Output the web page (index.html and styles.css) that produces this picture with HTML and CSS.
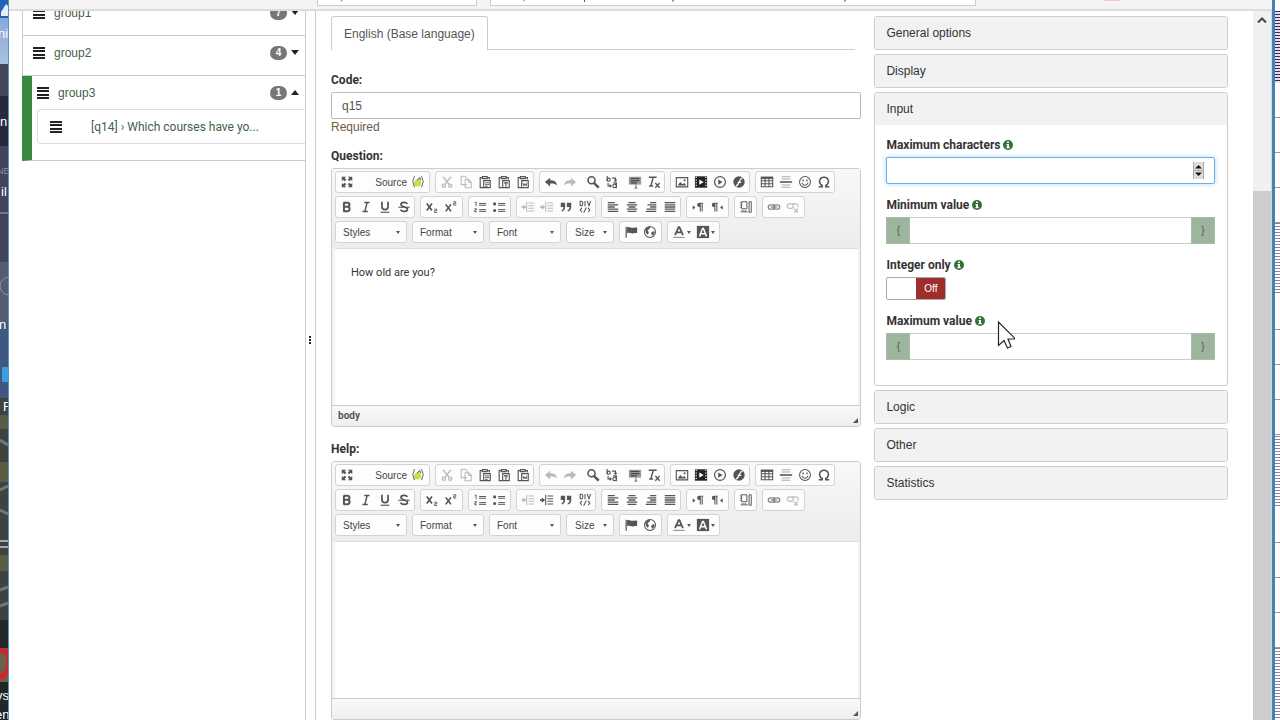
FILE: index.html
```html
<!DOCTYPE html>
<html lang="en">
<head>
    <meta charset="UTF-8">
    <meta name="viewport" content="width=device-width, initial-scale=1.0">
    <title>Edit question</title>
    <link rel="stylesheet" href="styles.css">
</head>
<body>
<!-- Icon sprite -->
<svg class="sprite" aria-hidden="true">
    <symbol id="i-bars" viewBox="0 0 12 12"><path d="M0 0h12v2H0zM0 3h12v2H0zM0 7h12v2H0zM0 10h12v2H0z" fill="currentColor"/></symbol>
    <symbol id="i-info" viewBox="0 0 10 10"><circle cx="5" cy="5" r="5" fill="#32703a"/><path d="M4 1.4h2v1.5H4zM3.4 3.9H6V7h.7v1.2H3.4V7h.7V5h-.7z" fill="#fff"/></symbol>
    <symbol id="i-maximize" viewBox="0 0 16 16"><path d="M2 2h5L5.4 3.6 7.2 5.4 5.4 7.2 3.6 5.4 2 7zM14 2v5l-1.6-1.6-1.8 1.8-1.8-1.8 1.8-1.8L9 2zM2 14V9l1.6 1.6 1.8-1.8 1.8 1.8-1.8 1.8L7 14zM14 14H9l1.6-1.6-1.8-1.8 1.8-1.8 1.8 1.8L14 9z" fill="currentColor"/></symbol>
    <symbol id="i-braces" viewBox="0 0 16 16"><circle cx="7.5" cy="9" r="4" fill="#c5e04a"/><path d="M4.500 1.500C2.500 1.500 3.500 7 1.500 7.500c2 .5 1 6 3 6M11.500 1.500c2 0 1 5.500 3 6-2 .5-1 6-3 6M7 6l3-3 1 3" fill="none" stroke="#667055" stroke-width="1.200"/></symbol>
    <symbol id="i-cut" viewBox="0 0 16 16"><g fill="none" stroke="currentColor" stroke-width="1.600"><path d="M3.500 2l6.800 8.500M12.500 2L5.700 10.500"/><circle cx="4.300" cy="12.200" r="1.800"/><circle cx="11.700" cy="12.200" r="1.800"/></g></symbol>
    <symbol id="i-copy" viewBox="0 0 16 16"><path d="M9 11H2.500V1.500H7L9.500 4v1M7 5.500h4.500L14 8v6.500H7zM11 5.500V8.500h3" fill="none" stroke="currentColor" stroke-width="1.200"/></symbol>
    <symbol id="i-paste" viewBox="0 0 16 16"><path d="M5 3H2.500v11.500H6M10.500 3H13v2M5 1.800h5.500v2.400H5zM6.500 6.500h7.500v8H6.500z" fill="none" stroke="currentColor" stroke-width="1.300"/><path d="M8 9h5M8 11h5M8 13h3" stroke="currentColor"/></symbol>
    <symbol id="i-pastetext" viewBox="0 0 16 16"><path d="M5 3H2.500v11.500H6M10.500 3H13v2M5 1.800h5.500v2.400H5zM6.500 6.500h7.500v8H6.500z" fill="none" stroke="currentColor" stroke-width="1.300"/><path d="M8 9h4.500M10.200 9v4.500" stroke="currentColor" stroke-width="1.300"/></symbol>
    <symbol id="i-pasteword" viewBox="0 0 16 16"><path d="M5 3H2.500v11.500H6M10.500 3H13v2M5 1.800h5.500v2.400H5zM6.500 6.500h7.500v8H6.500z" fill="none" stroke="currentColor" stroke-width="1.300"/><path d="M8 9l1 3.500 1.200-2.500 1.300 2.500 1-3.500" fill="none" stroke="currentColor"/></symbol>
    <symbol id="i-undo" viewBox="0 0 16 16"><path d="M1 8l6-5v3c5 0 7.500 2 8 6-2-2-4-2.500-8-2.300V13z" fill="currentColor"/></symbol>
    <symbol id="i-redo" viewBox="0 0 16 16"><path d="M15 8L9 3v3c-5 0-7.500 2-8 6 2-2 4-2.500 8-2.300V13z" fill="currentColor"/></symbol>
    <symbol id="i-find" viewBox="0 0 16 16"><circle cx="6.300" cy="6" r="4" fill="none" stroke="currentColor" stroke-width="1.800"/><path d="M9 9l5.500 5.500" stroke="currentColor" stroke-width="2.800"/></symbol>
    <symbol id="i-replace" viewBox="0 0 16 16"><g fill="none" stroke="currentColor" stroke-width="1.300"><path d="M2.500 1v6"/><circle cx="4.200" cy="5.300" r="1.800"/><circle cx="11" cy="12.500" r="2"/><path d="M9.500 9h3.500v6M8 3.500h4V7M10.500 5.500L12 7l1.500-1.500M3.500 9v3.500H7M5.500 11L7 12.500 5.500 14"/></g></symbol>
    <symbol id="i-selectall" viewBox="0 0 16 16"><path d="M1 2h14v9H1z" fill="#999"/><path d="M3 4h10M3 6.500h10M3 9h7" stroke="#444" stroke-width="1.300"/><path d="M9 11v4M7.500 15h3" stroke="currentColor"/></symbol>
    <symbol id="i-removeformat" viewBox="0 0 16 16"><path d="M2 2.500h9M7 3L4.500 12M2.500 12.500H7M9.500 9l5 5.500M14.500 9l-5 5.500" fill="none" stroke="currentColor" stroke-width="1.600"/></symbol>
    <symbol id="i-image" viewBox="0 0 16 16"><path d="M1.500 3h13v10.500h-13z" fill="none" stroke="currentColor" stroke-width="1.300"/><path d="M3 12l3-4 2.500 2.500L10.500 9l2.500 3z" fill="currentColor"/><circle cx="11" cy="6" r="1.200" fill="currentColor"/></symbol>
    <symbol id="i-video" viewBox="0 0 16 16"><path d="M1 1.500h14v13H1z" fill="#222"/><path d="M2.500 2v12M13.500 2v12" stroke="#fff" stroke-width="1.300" stroke-dasharray="1.500 1.500"/><path d="M6 5l5 3-5 3z" fill="#fff"/></symbol>
    <symbol id="i-play" viewBox="0 0 16 16"><circle cx="8" cy="8" r="6.200" fill="none" stroke="currentColor" stroke-width="1.400"/><path d="M6 5l5 3-5 3z" fill="currentColor"/></symbol>
    <symbol id="i-flash" viewBox="0 0 16 16"><circle cx="8" cy="8" r="6.500" fill="currentColor"/><path d="M12 3.500C8 3.500 8.500 12 4.500 12.500M6.500 8.500h4" fill="none" stroke="#fff" stroke-width="1.400"/></symbol>
    <symbol id="i-table" viewBox="0 0 16 16"><path d="M1.500 2.500h13v11h-13zM1.500 6.500h13M1.500 10h13M5.800 3v10.500M10.200 3v10.500" fill="none" stroke="currentColor" stroke-width="1.200"/><path d="M1 2h14v2.500H1z" fill="currentColor"/></symbol>
    <symbol id="i-hr" viewBox="0 0 16 16"><path d="M3 2h10M3 4.500h10M3 11.500h10M3 14h10" stroke="#aaa" stroke-width="1.200"/><path d="M1 8h14" stroke="currentColor" stroke-width="1.800"/></symbol>
    <symbol id="i-smiley" viewBox="0 0 16 16"><circle cx="8" cy="8" r="6.200" fill="none" stroke="currentColor" stroke-width="1.200"/><path d="M4.500 9c1.500 3.500 5.500 3.500 7 0" fill="none" stroke="currentColor" stroke-width="1.200"/><path d="M5 5h1.600v2H5zM9.500 5H11v2H9.500z" fill="currentColor"/></symbol>
    <symbol id="i-omega" viewBox="0 0 16 16"><path d="M2 13.500h4V12C1 9 2.500 2.500 8 2.500S15 9 10 12v1.500h4" fill="none" stroke="currentColor" stroke-width="1.800"/></symbol>
    <symbol id="i-bold" viewBox="0 0 16 16"><path d="M4.500 3v10M4 3.200h4.500a2.300 2.300 0 0 1 0 4.600H5M8.500 7.800a2.500 2.500 0 0 1 0 5H4" fill="none" stroke="currentColor" stroke-width="2.300"/></symbol>
    <symbol id="i-italic" viewBox="0 0 16 16"><path d="M6 2.800h6M4 13.200h6M9.300 3L6.700 13" fill="none" stroke="currentColor" stroke-width="1.700"/></symbol>
    <symbol id="i-underline" viewBox="0 0 16 16"><path d="M4.500 2v5.500a3.500 3.500 0 0 0 7 0V2" fill="none" stroke="currentColor" stroke-width="2"/><path d="M3 14h10" stroke="currentColor" stroke-width="1.300"/></symbol>
    <symbol id="i-strike" viewBox="0 0 16 16"><path d="M12 4.500C10.500 2 4.500 2 4.500 5.200c0 3.300 7.500 2.200 7.500 5.300 0 3.300-6.500 3.300-8 .5" fill="none" stroke="currentColor" stroke-width="1.900"/><path d="M1.500 8.300h13" stroke="currentColor" stroke-width="1.200"/></symbol>
    <symbol id="i-sub" viewBox="0 0 16 16"><path d="M2 4l6 8M8 4l-6 8" stroke="currentColor" stroke-width="1.900"/><path d="M10.500 10.500h3v1.800h-2.500v2h3" fill="none" stroke="currentColor"/></symbol>
    <symbol id="i-sup" viewBox="0 0 16 16"><path d="M2 5l6 8M8 5l-6 8" stroke="currentColor" stroke-width="1.900"/><path d="M10.500 2h3v1.800h-2.500v2h3" fill="none" stroke="currentColor"/></symbol>
    <symbol id="i-ol" viewBox="0 0 16 16"><path d="M7 4h8M7 6h8M7 11h8M7 13h8" stroke="currentColor" stroke-width="1.100"/><path d="M2 3l1.500-.8V7M1.800 9.800h2V11.500H2v2h2.500" fill="none" stroke="currentColor"/></symbol>
    <symbol id="i-ul" viewBox="0 0 16 16"><path d="M7 4h8M7 6h8M7 11h8M7 13h8" stroke="currentColor" stroke-width="1.100"/><circle cx="3" cy="4.500" r="1.800" fill="currentColor"/><circle cx="3" cy="12" r="1.800" fill="currentColor"/></symbol>
    <symbol id="i-outdent" viewBox="0 0 16 16"><path d="M6.500 2v12M8.500 3.500H15M8.500 6.500H15M8.500 9.500H15M8.500 12.500H15" stroke="currentColor" stroke-width="1.200"/><path d="M0 8l4-3v2h2v2H4v2z" fill="currentColor"/></symbol>
    <symbol id="i-indent" viewBox="0 0 16 16"><path d="M6.500 2v12M8.500 3.500H15M8.500 6.500H15M8.500 9.500H15M8.500 12.500H15" stroke="currentColor" stroke-width="1.200"/><path d="M6 8L2 5v2H0v2h2v2z" fill="currentColor"/></symbol>
    <symbol id="i-quote" viewBox="0 0 16 16"><path d="M2 3h5v5c0 3-1.500 4.500-4 5v-1.500C4.500 11 5 10 5 8H2zM9 3h5v5c0 3-1.500 4.500-4 5v-1.500c1.500-.5 2-1.500 2-3.500H9z" fill="currentColor"/></symbol>
    <symbol id="i-div" viewBox="0 0 16 16"><path d="M2.500 1.500v5H4c2 0 2-5 0-5zM8 1v6M10.500 1l2 5.500 2-5.500M4.500 9L2.500 11.500l2 2.500M9.500 8.500l-3 6M11.500 9l2 2.500-2 2.500" fill="none" stroke="currentColor" stroke-width="1.200"/></symbol>
    <symbol id="i-left" viewBox="0 0 16 16"><path d="M2 3h8M2 5.500h12M2 8h8M2 10.500h12M2 13h12" stroke="currentColor" stroke-width="1.500"/></symbol>
    <symbol id="i-center" viewBox="0 0 16 16"><path d="M4 3h8M2 5.500h12M4 8h8M2 10.500h12M3 13h10" stroke="currentColor" stroke-width="1.500"/></symbol>
    <symbol id="i-right" viewBox="0 0 16 16"><path d="M7 3h7M4 5.500h10M7 8h7M3 10.500h11M2 13h12" stroke="currentColor" stroke-width="1.500"/></symbol>
    <symbol id="i-justify" viewBox="0 0 16 16"><path d="M2 3h12M2 5.500h12M2 8h12M2 10.500h12M2 13h12" stroke="currentColor" stroke-width="1.500"/></symbol>
    <symbol id="i-ltr" viewBox="0 0 16 16"><path d="M2 6l3 2.500L2 11z" fill="currentColor"/><path d="M14 3H9.500a2.500 2.500 0 0 0 0 5H10v5h1.200V4h1v9h1.200V4H14z" fill="currentColor"/></symbol>
    <symbol id="i-rtl" viewBox="0 0 16 16"><path d="M14.500 6l-3 2.500 3 2.500z" fill="currentColor"/><path d="M9 3H4.500a2.500 2.500 0 0 0 0 5H5v5h1.200V4h1v9h1.200V4H9z" fill="currentColor"/></symbol>
    <symbol id="i-blocks" viewBox="0 0 16 16"><path d="M3 2h6v8H3zM2 13.500h8M11.500 2H14v12h-2.500z" fill="none" stroke="currentColor" stroke-width="1.100"/><path d="M1.500 2v8M3 12h6" stroke="currentColor" stroke-dasharray="1 1"/></symbol>
    <symbol id="i-link" viewBox="0 0 16 16"><g fill="none" stroke="#888"><rect x="1.500" y="5.500" width="7.500" height="5" rx="2.500" stroke-width="1.500"/><rect x="7" y="5.500" width="7.500" height="5" rx="2.500" stroke-width="1.500"/><path d="M4 8h8" stroke-width="1.200"/></g></symbol>
    <symbol id="i-unlink" viewBox="0 0 16 16"><rect x="1.500" y="4.500" width="7" height="5" rx="2.500" fill="none" stroke="currentColor" stroke-width="1.300"/><path d="M7 4.500h4.500a2.500 2.500 0 0 1 2 4M9.500 10l4 4.500M13.500 10l-4 4.500" fill="none" stroke="currentColor" stroke-width="1.300"/></symbol>
    <symbol id="i-flag" viewBox="0 0 16 16"><path d="M2.500 2v12.500" stroke="currentColor" stroke-width="1.400"/><path d="M3.500 2.500c3-1.200 4 1.200 6.500.7 1.500-.3 3-.7 5-.2v6.200c-3-.7-4.500.8-6.500.3-2-.6-3-.9-5 0z" fill="currentColor"/></symbol>
    <symbol id="i-globe" viewBox="0 0 16 16"><circle cx="8" cy="8" r="6.300" fill="none" stroke="currentColor" stroke-width="1.200"/><path d="M2.500 5L6 2l2.500.5L7 4.500 5 6l1.500 2v1.500L5.500 11 3.500 9zM10 8l2-1 1.500 1-1.500 3.500-2 .5-.5-2.500z" fill="currentColor"/></symbol>
    <symbol id="i-color" viewBox="0 0 16 16"><path d="M3.500 11.500L7.500 2.500h1l4 9M5 8.500h6" fill="none" stroke="currentColor" stroke-width="2"/><path d="M1.500 14.200h13" stroke="#999" stroke-width="1.400"/></symbol>
    <symbol id="i-bgcolor" viewBox="0 0 16 16"><path d="M1 1h14v14H1z" fill="currentColor"/><path d="M4 13L7.500 4h1l3.500 9M5.500 10h5" fill="none" stroke="#fff" stroke-width="1.600"/></symbol>
</svg>

<div class="desktop">
    <svg class="wallpaper" viewBox="0 0 8 720" preserveAspectRatio="xMinYMin slice" aria-hidden="true">
        <defs>
            <linearGradient id="sky" x1="0" y1="0" x2="0" y2="1">
                <stop offset="0" stop-color="#7e9fd0"/><stop offset="1" stop-color="#a9c0e3"/>
            </linearGradient>
        </defs>
        <path d="M0 0h8v64H0z" fill="url(#sky)"/>
        <path d="M0 0h8v18H0z" fill="#2462b5"/><path d="M1 12l5-8 2 2v10H1z" fill="#e4edf8"/>
        <path d="M0 64h8v32H0z" fill="#44485b"/><path d="M0 96h8v50H0z" fill="#262a3b"/>
        <path d="M0 146h8v116H0z" fill="#41445a"/><path d="M0 213h8" stroke="#aaa"/>
        <path d="M0 262h8v60H0z" fill="#555b70"/><circle cx="9" cy="286" r="9" fill="none" stroke="#8d93a5"/>
        <path d="M0 322h8v76H0z" fill="#40577f"/><path d="M2 367h6v15H2z" fill="#38a0e0"/>
        <path d="M0 398h8v322H0z" fill="#3f423f"/>
        <path d="M0 415h8v14H0zM0 462h8v20H0zM0 555h8v16H0z" fill="#5a5d43"/>
        <path d="M0 440l8 5M0 490l8-4M0 510l8 4M0 590l8-3M0 606l8-3" stroke="#71777c" stroke-width="3"/>
        <path d="M0 541h8M0 547h8" stroke="#a6a8aa" stroke-width="2"/>
        <path d="M0 620h8v28H0z" fill="#24272a"/><path d="M0 648h8v34H0z" fill="#6a614b"/>
        <path d="M0 651c9-2 11 8 7 21l-7 6" fill="none" stroke="#d8202a" stroke-width="5"/>
        <path d="M0 682h8v38H0z" fill="#22252a"/>
        <g class="wallpaper-text">
            <text x="-2" y="38">ni</text><text x="0" y="126">n</text><text class="dim" x="-3" y="174">NE</text>
            <text x="1" y="196">il</text><text x="-1" y="329">n</text><text x="3" y="411">F</text>
            <text x="-4" y="700">vs</text><text x="-5" y="719">en</text>
        </g>
    </svg>

    <div class="window">
        <div class="topbar">
            <svg width="160" height="6" viewBox="0 0 160 6" aria-hidden="true"><path d="M0-4h159.500V5.500H.5V-4" fill="#fff" stroke="#ccc"/><path d="M25 0l-1 1.500" stroke="#666"/></svg>
            <svg width="486" height="6" viewBox="0 0 486 6" aria-hidden="true"><path d="M.5-4v9.500h485V-4" fill="#fff" stroke="#ccc"/><path d="M94.500 0v2M184 0l-2 1.500M356 0l-2 1.500M34 0v1" fill="none" stroke="#555"/></svg>
            <svg class="topbar-mark" width="16" height="2" aria-hidden="true"><path d="M0 0h16v1H0z" fill="#f6c9c9"/></svg>
        </div>
        <div class="workspace">
            <nav class="sidebar">
                <ul class="groups">
                    <li class="group">
                        <a class="group-row" href="#group1"><svg class="bars"><use href="#i-bars"/></svg><span class="group-name">group1</span><span class="badge">7</span><span class="caret down"></span></a>
                    </li>
                    <li class="group">
                        <a class="group-row" href="#group2"><svg class="bars"><use href="#i-bars"/></svg><span class="group-name">group2</span><span class="badge">4</span><span class="caret down"></span></a>
                    </li>
                    <li class="group active">
                        <a class="group-row" href="#group3"><svg class="bars"><use href="#i-bars"/></svg><span class="group-name">group3</span><span class="badge">1</span><span class="caret up"></span></a>
                        <a class="question-row" href="#q14"><svg class="bars"><use href="#i-bars"/></svg><span>[q14] › Which courses have yo...</span></a>
                    </li>
                </ul>
            </nav>
            <div class="resizer"><i></i><i></i><i></i></div>
            <main class="content">
                <form class="question-form">
                    <div class="tabs"><a class="tab" href="#en">English (Base language)</a></div>
                    <label class="form-label" for="code">Code:</label>
                    <input class="form-control" id="code" type="text" value="q15">
                    <p class="help-text">Required</p>

                    <label class="form-label" for="question">Question:</label>
                    <div class="editor">
                        <div class="toolbar" data-state="edited"></div>
                        <textarea class="editor-body" id="question">How old are you?</textarea>
                        <div class="editor-foot"><span>body</span><i class="grip"></i></div>
                    </div>

                    <label class="form-label" for="help">Help:</label>
                    <div class="editor">
                        <div class="toolbar" data-state="empty"></div>
                        <textarea class="editor-body" id="help"></textarea>
                        <div class="editor-foot"><span></span><i class="grip"></i></div>
                    </div>
                </form>

                <aside class="panels">
                    <section class="panel"><button class="panel-heading" type="button">General options</button></section>
                    <section class="panel"><button class="panel-heading" type="button">Display</button></section>
                    <section class="panel open">
                        <button class="panel-heading" type="button">Input</button>
                        <div class="panel-body">
                            <div class="field">
                                <label for="maxchars">Maximum characters <svg class="info"><use href="#i-info"/></svg></label>
                                <div class="number">
                                    <input class="form-control focused" id="maxchars" type="number">
                                    <svg class="spinner" viewBox="0 0 11 17" aria-hidden="true"><path d="M0 0h11v17H0z" fill="#ddd"/><path d="M0 8.500h11M.5 0v17M10.500 0v17" stroke="#aaa"/><path d="M2 6.500L5.500 3 9 6.500zM2 10.500L5.500 14 9 10.500z" fill="#111"/></svg>
                                </div>
                            </div>
                            <div class="field">
                                <label for="minvalue">Minimum value <svg class="info"><use href="#i-info"/></svg></label>
                                <div class="input-group"><span class="addon">{</span><input class="form-control" id="minvalue" type="text"><span class="addon">}</span></div>
                            </div>
                            <div class="field">
                                <label for="integeronly">Integer only <svg class="info"><use href="#i-info"/></svg></label>
                                <label class="switch"><input id="integeronly" type="checkbox"><span class="knob"></span><span class="state">Off</span></label>
                            </div>
                            <div class="field">
                                <label for="maxvalue">Maximum value <svg class="info"><use href="#i-info"/></svg></label>
                                <div class="input-group"><span class="addon">{</span><input class="form-control" id="maxvalue" type="text"><span class="addon">}</span></div>
                            </div>
                        </div>
                    </section>
                    <section class="panel"><button class="panel-heading" type="button">Logic</button></section>
                    <section class="panel"><button class="panel-heading" type="button">Other</button></section>
                    <section class="panel"><button class="panel-heading" type="button">Statistics</button></section>
                </aside>
            </main>
            <div class="scrollbar">
                <svg width="10" height="6" viewBox="0 0 10 6" aria-hidden="true"><path d="M1 5.500l4-4 4 4" fill="none" stroke="#444" stroke-width="2"/></svg>
                <div class="thumb"></div>
            </div>
        </div>
    </div>
    <div class="behind">
        <div class="noise tall"></div>
        <div class="lines"></div>
        <div class="noise"></div>
        <div class="lines"></div>
        <div class="noise"></div>
        <div class="lines"></div>
        <div class="noise"></div>
    </div>
    <svg class="pointer" viewBox="0 0 18 28" aria-hidden="true"><path d="M1.500 1v23.500l5.500-5 3.500 7.500 3.500-1.500-3-7.500h7.500z" fill="#fff" stroke="#223" stroke-width="1.200"/></svg>
</div>
<script src="script.js"></script>
</body>
</html>
```
FILE: styles.css
```css
* {
    box-sizing: border-box;
}
body {
    margin: 0;
    font-family: "Liberation Sans", Arial, sans-serif;
    font-size: 12px;
    line-height: 16px;
    color: #333;
    background: #fff;
}
a {
    color: #456049;
    text-decoration: none;
}
button, input, select, textarea {
    font-family: inherit;
    font-size: inherit;
    color: inherit;
}
svg {
    display: block;
    flex: none;
}
.sprite {
    display: none;
}

/* Desktop and browser window */
.desktop {
    position: relative;
    display: flex;
    height: 100vh;
    overflow: hidden;
}
.wallpaper {
    width: 8px;
    height: 100%;
}
.wallpaper-text {
    fill: #fff;
    font-size: 13px;
}
.wallpaper-text .dim {
    fill: #8d909c;
    font-size: 9px;
}
.window {
    flex: 1;
    min-width: 0;
    display: flex;
    flex-direction: column;
    border-left: 1px solid #4b9cc0;
    border-right: 3px solid #4b7fae;
    background: #fff;
}
.topbar {
    flex: none;
    display: flex;
    gap: 13px;
    height: 11px;
    padding-left: 308px;
    background: #f4f4f4;
    border-bottom: 2px solid #dcdcdc;
}
.topbar-mark {
    margin-left: 115px;
}
.workspace {
    flex: 1;
    min-height: 0;
    display: flex;
}

/* Question explorer */
.sidebar {
    width: 297px;
    padding-left: 13px;
    border-right: 1px solid #ccc;
    overflow: hidden;
}
.groups {
    list-style: none;
    margin: -15px 0 0;
    padding: 0;
}
.group {
    border: 1px solid #ccc;
    border-right: 0;
    border-top: 0;
    min-height: 40px;
}
.group-row {
    display: flex;
    align-items: center;
    height: 33px;
    padding: 0 6px 0 10px;
}
.bars {
    width: 12px;
    height: 12px;
    color: #222;
}
.group-name {
    flex: 1;
    margin-left: 9px;
}
.badge {
    width: 17px;
    height: 14px;
    margin-right: 4px;
    border-radius: 7px;
    background: #777;
    color: #fff;
    font-size: 10px;
    font-weight: bold;
    line-height: 14px;
    text-align: center;
}
.caret {
    border: 4px solid transparent;
}
.caret.down {
    border-top: 5px solid #222;
    border-bottom: 0;
}
.caret.up {
    border-bottom: 5px solid #222;
    border-top: 0;
}
.group.active {
    padding-bottom: 16px;
    border-left: 10px solid #38893f;
}
.group.active .group-row {
    padding-left: 5px;
}
.question-row {
    display: flex;
    align-items: center;
    gap: 29px;
    height: 35px;
    margin-left: 5px;
    padding-left: 12px;
    border: 1px solid #ddd;
    border-right: 0;
    border-radius: 4px 0 0 4px;
    font-family: Roboto, sans-serif;
}
.resizer {
    width: 10px;
    padding: 325px 3px 0;
    border-right: 1px solid #ccc;
}
.resizer i {
    display: block;
    width: 2px;
    height: 2px;
    margin-bottom: 1px;
    background: #222;
}

/* Question form */
.content {
    flex: 1;
    min-width: 0;
    display: grid;
    grid-template-columns: 3fr 2fr;
    gap: 13px;
    padding: 5px 25px 0 15px;
    overflow: hidden;
}
.tabs {
    display: flex;
    height: 34px;
    margin-right: 6px;
    border-bottom: 1px solid #ccc;
}
.tab {
    height: 34px;
    padding: 9px 12px;
    border: 1px solid #ccc;
    border-bottom: 0;
    border-radius: 3px 3px 0 0;
    background: #fff;
    color: #555;
}
.form-label {
    display: block;
    margin-top: 14px;
    font-family: Roboto, sans-serif;
    font-weight: bold;
}
.tabs + .form-label {
    margin: 22px 0 4px;
}
.form-control {
    display: block;
    width: 100%;
    height: 27px;
    padding: 0 10px;
    border: 1px solid #bbb;
    border-radius: 2px;
    background: #fff;
    color: #555;
    outline: 0;
}
.help-text {
    margin: 0;
    color: #705a45;
}
.help-text + .form-label {
    margin-top: 13px;
}
.editor {
    display: flex;
    flex-direction: column;
    margin-top: 4px;
    border: 1px solid #ccc;
    border-radius: 3px;
    background: #f3f3f3;
}
.toolbar {
    display: flex;
    flex-direction: column;
    gap: 3px;
    padding: 2px 3px 5px;
    background: linear-gradient(#f8f8f8, #ececec);
}
.toolbar-row {
    display: flex;
    gap: 5px;
}
.tool-group {
    display: flex;
    align-items: center;
    height: 22px;
    padding: 0 1px;
    border: 1px solid #d3d3d3;
    border-radius: 3px;
    background: #fdfdfd;
}
.tool-group.pair {
    padding-right: 2px;
}
.tool {
    display: flex;
    align-items: center;
    justify-content: center;
    width: 19px;
    height: 20px;
    padding: 0;
    border: 0;
    background: none;
    color: #555;
}
.tool svg {
    width: 14px;
    height: 14px;
}
.tool.off {
    color: #bbb;
}
.tool.spaced {
    margin-left: 4px;
}
.tool.source {
    justify-content: flex-end;
    gap: 4px;
    width: 72px;
    padding-right: 3px;
    color: #444;
    font-size: 10px;
}
.tool.menu {
    width: 24px;
    gap: 1px;
}
.tool.menu::after, .combo::after {
    content: "";
    border: 2px solid transparent;
    border-top: 3px solid #555;
    border-bottom: 0;
}
.combo {
    position: relative;
    height: 22px;
    border: 1px solid #d3d3d3;
    border-radius: 3px;
    background: #fdfdfd;
}
.combo::after {
    position: absolute;
    top: 9px;
    right: 6px;
}
.combo select {
    appearance: none;
    width: 70px;
    height: 20px;
    padding: 0 7px;
    border: 0;
    background: none;
    font-size: 10px;
    color: #444;
}
.combo.small select {
    width: 46px;
    padding: 0 0 0 8px;
}
.editor-body {
    display: block;
    height: 157px;
    margin: 0 2px 0 3px;
    padding: 16px;
    border: 0;
    border-top: 1px solid #ddd;
    background: #fff;
    resize: none;
    outline: 0;
    font-family: Roboto, sans-serif;
    font-size: 11px;
    line-height: 16px;
}
.editor-foot {
    display: flex;
    align-items: center;
    justify-content: space-between;
    height: 21px;
    padding: 0 2px 0 6px;
    border-top: 1px solid #ccc;
    background: linear-gradient(#fafafa, #eee);
    font-family: Roboto, sans-serif;
    font-size: 10px;
    font-weight: bold;
    color: #555;
}
.grip {
    align-self: flex-end;
    margin-bottom: 3px;
    border-left: 5px solid transparent;
    border-bottom: 5px solid #555;
}

/* Advanced options */
.panels {
    display: flex;
    flex-direction: column;
    gap: 4px;
}
.panel {
    border: 1px solid #ccc;
    border-radius: 3px;
    overflow: hidden;
}
.panel-heading {
    display: block;
    width: 100%;
    height: 32px;
    padding: 0 11px;
    border: 0;
    background: #f2f2f2;
    text-align: left;
}
.panel-body {
    padding: 12px 12px 12px 11px;
}
.field {
    margin-bottom: 13px;
}
.field > label {
    display: flex;
    align-items: center;
    gap: 3px;
    margin-bottom: 4px;
    font-family: Roboto, sans-serif;
    font-weight: bold;
}
.info {
    width: 10px;
    height: 10px;
}
.number {
    position: relative;
}
.number input {
    appearance: textfield;
}
.form-control.focused {
    border-color: #66afe9;
    box-shadow: 0 0 5px rgba(102, 175, 233, 0.5);
}
.spinner {
    position: absolute;
    top: 5px;
    right: 11px;
    width: 11px;
    height: 17px;
}
.input-group {
    display: flex;
}
.input-group .form-control {
    flex: 1;
    min-width: 0;
    border-width: 1px 0;
    border-color: #ccc;
    border-radius: 0;
}
.addon {
    width: 24px;
    height: 27px;
    border: 1px solid #a9bba9;
    background: #9cb59c;
    color: #555;
    font-size: 10px;
    line-height: 26px;
    text-align: center;
}
.field > .switch {
    position: relative;
    display: inline-flex;
    align-items: stretch;
    gap: 0;
    width: 60px;
    height: 23px;
    margin: 0;
    border: 1px solid #aaa;
    border-radius: 2px;
    overflow: hidden;
    vertical-align: top;
    font-weight: normal;
}
.switch input {
    position: absolute;
    inset: 0;
    margin: 0;
    opacity: 0;
}
.knob {
    flex: 1;
}
.state {
    width: 29px;
    background: #9d2e2c;
    color: #fff;
    font-family: "Liberation Sans", Arial, sans-serif;
    font-size: 10px;
    line-height: 22px;
    text-align: center;
}

/* Scrollbar */
.scrollbar {
    flex: none;
    display: flex;
    flex-direction: column;
    align-items: center;
    width: 19px;
    padding-top: 6px;
    border-right: 1px solid #b5e3ee;
    background: #f0f0f0;
}
.thumb {
    flex: 1;
    width: 100%;
    margin-top: 168px;
    background: #cdcdcd;
}

/* Strip of the window behind */
.behind {
    display: flex;
    flex-direction: column;
    width: 5px;
    padding-top: 11px;
    background: #fff;
}
.noise {
    height: 72px;
    background: repeating-linear-gradient(#8d8298 0, #8d8298 1px, #fff 1px, #fff 3px);
}
.noise.tall {
    background: repeating-linear-gradient(#3c2452 0, #3c2452 1px, #e6dcf0 1px, #e6dcf0 3px);
}
.lines {
    flex: 1;
    background: repeating-linear-gradient(#fff 0, #fff 34px, #999 34px, #999 35px);
}

.pointer {
    position: absolute;
    top: 321px;
    left: 997px;
    width: 18px;
    height: 28px;
}
```
FILE: script.js
```js
// Toolbar layout: each row is a list of groups, "-" leaves a small gap
const rows = [
    [['maximize', 'source'], ['cut', 'copy', 'paste', 'pastetext', 'pasteword'], ['undo', 'redo', '-', 'find', 'replace', '-', 'selectall', 'removeformat'], ['image', 'video', 'play', 'flash'], ['table', 'hr', 'smiley', 'omega']],
    [['bold', 'italic', 'underline', 'strike'], ['sub', 'sup'], ['ol', 'ul'], ['outdent', 'indent', 'quote', 'div'], ['left', 'center', 'right', 'justify'], ['ltr', 'rtl'], ['blocks'], ['link', 'unlink']],
    ['Styles', 'Format', 'Font', 'Size', ['flag', 'globe'], ['color', 'bgcolor']]
];

const disabled = {
    edited: ['cut', 'copy', 'redo', 'outdent', 'indent', 'unlink'],
    empty: ['cut', 'copy', 'undo', 'redo', 'outdent', 'unlink']
};

function icon(name) {
    return `<svg viewBox="0 0 16 16"><use href="#i-${name}"/></svg>`;
}

function createTool(name, state, spaced) {
    if (name === 'source') {
        return `<button type="button" class="tool source">Source ${icon('braces')}</button>`;
    }
    let classes = 'tool';
    if (disabled[state].includes(name)) classes += ' off';
    if (spaced) classes += ' spaced';
    if (name === 'color' || name === 'bgcolor') classes += ' menu';
    return `<button type="button" class="${classes}" aria-label="${name}">${icon(name)}</button>`;
}

function createGroup(group, state) {
    if (typeof group === 'string') {
        const small = group === 'Size' ? ' small' : '';
        return `<div class="combo${small}"><select aria-label="${group}"><option>${group}</option></select></div>`;
    }
    let html = '';
    group.forEach((name, i) => {
        if (name !== '-') html += createTool(name, state, group[i - 1] === '-');
    });
    const pair = group.length === 2 && group[1] !== 'source' ? ' pair' : '';
    return `<div class="tool-group${pair}">${html}</div>`;
}

document.querySelectorAll('.toolbar').forEach(toolbar => {
    const state = toolbar.dataset.state;
    toolbar.innerHTML = rows.map(row =>
        `<div class="toolbar-row">${row.map(group => createGroup(group, state)).join('')}</div>`
    ).join('');
});
```
